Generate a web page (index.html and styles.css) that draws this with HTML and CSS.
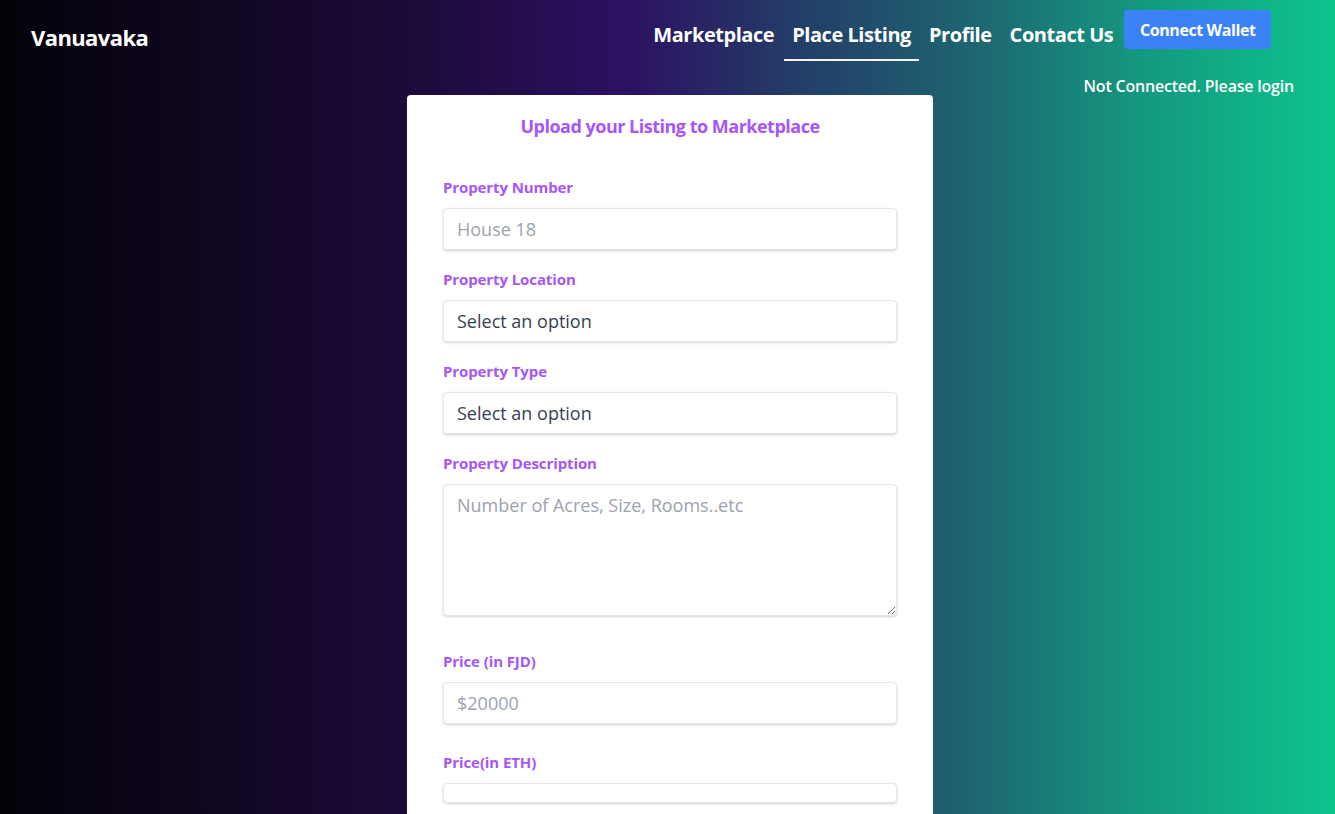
FILE: index.html
```html
<!DOCTYPE html>
<html lang="en">
<head>
<meta charset="utf-8">
<title>Vanuavaka</title>
<link rel="stylesheet" href="styles.css">
</head>
<body>
<div class="page">
  <header class="header">
    <div class="topbar">
      <div class="logo">Vanuavaka</div>
      <nav class="nav">
        <a class="nav-item">Marketplace</a>
        <a class="nav-item active">Place Listing</a>
        <a class="nav-item">Profile</a>
        <a class="nav-item">Contact Us</a>
        <button class="connect">Connect Wallet</button>
      </nav>
    </div>
    <div class="status">Not Connected. Please login</div>
  </header>
  <main class="main">
    <form class="card">
      <h2 class="card-title">Upload your Listing to Marketplace</h2>
      <div class="field first">
        <label class="label">Property Number</label>
        <input class="control" type="text" placeholder="House 18">
      </div>
      <div class="field">
        <label class="label">Property Location</label>
        <select class="control"><option>Select an option</option></select>
      </div>
      <div class="field">
        <label class="label">Property Type</label>
        <select class="control"><option>Select an option</option></select>
      </div>
      <div class="field">
        <label class="label">Property Description</label>
        <textarea class="control area" placeholder="Number of Acres, Size, Rooms..etc"></textarea>
      </div>
      <div class="field wide">
        <label class="label">Price (in FJD)</label>
        <input class="control" type="text" placeholder="$20000">
      </div>
      <div class="field mid">
        <label class="label">Price(in ETH)</label>
        <input class="control thin" type="text" readonly>
      </div>
    </form>
  </main>
</div>
</body>
</html>
```

FILE: styles.css
```css
* { box-sizing: border-box; }
html, body { margin: 0; padding: 0; height: 100%; overflow: hidden; }
body {
  font-family: "Open Sans", "Liberation Sans", sans-serif;
  background: linear-gradient(90deg, #030208 0%, #120724 18%, #1d0b3c 32%, #2c1162 47%, #233e68 60%, #1e6270 72%, #149a80 86%, #0dc48d 100%);
  color: #fff;
}
.page { min-height: 100%; }
.header { display: flex; flex-direction: column; }
.topbar {
  display: flex;
  justify-content: space-between;
  align-items: flex-start;
  padding: 10px 64px 0 31px;
  height: 75px;
}
.logo {
  margin-top: 11px;
  font-size: 22px;
  line-height: 32px;
  font-weight: 700;
  letter-spacing: -0.6px;
}
.nav { display: flex; align-items: flex-start; }
.nav-item {
  display: block;
  padding: 11px 8px 10px;
  margin: 0 1px;
  font-size: 20px;
  line-height: 28px;
  font-weight: 700;
  letter-spacing: -0.45px;
  color: #fff;
  border-bottom: 2px solid transparent;
}
.nav-item.active { border-bottom-color: #f3f4f6; }
.connect {
  margin-left: 2px;
  height: 39px;
  padding: 0 15.5px;
  background: #3b82f6;
  color: #fff;
  border: none;
  border-radius: 4px;
  font-family: inherit;
  font-size: 16px;
  font-weight: 700;
  letter-spacing: -0.4px;
}
.status {
  height: 20px;
  line-height: 22px;
  text-align: right;
  padding-right: 41px;
  font-size: 16px;
  font-weight: 600;
  letter-spacing: -0.2px;
}
.main { display: flex; justify-content: center; padding-left: 5px; }
.card {
  width: 526px;
  background: #fff;
  border-radius: 4px;
  padding: 18px 36px 40px;
}
.card-title {
  margin: 0;
  text-align: center;
  font-size: 18px;
  line-height: 27px;
  font-weight: 700;
  color: #a855f7;
  letter-spacing: -0.5px;
}
.field { margin-top: 19px; }
.field.first { margin-top: 37px; }
.field.wide { margin-top: 35px; }
.field.mid { margin-top: 28px; }
.label {
  display: block;
  font-size: 15px;
  line-height: 20px;
  font-weight: 700;
  color: #a855f7;
  letter-spacing: -0.1px;
  margin-bottom: 11px;
}
.control {
  display: block;
  width: 100%;
  height: 42px;
  padding: 7px 13px;
  border: 1px solid #e5e7eb;
  border-radius: 4px;
  box-shadow: 0 1px 3px rgba(0,0,0,0.12), 0 1px 2px rgba(0,0,0,0.06);
  background: #fff;
  font-family: inherit;
  font-size: 18px;
  line-height: 26px;
  color: #374151;
  outline: none;
  -webkit-appearance: none;
  appearance: none;
}
.control::placeholder { color: #9ca3af; }
.area { height: 132px; resize: vertical; padding-top: 7px; }
.thin { height: 20px; padding: 0 13px; }
```
